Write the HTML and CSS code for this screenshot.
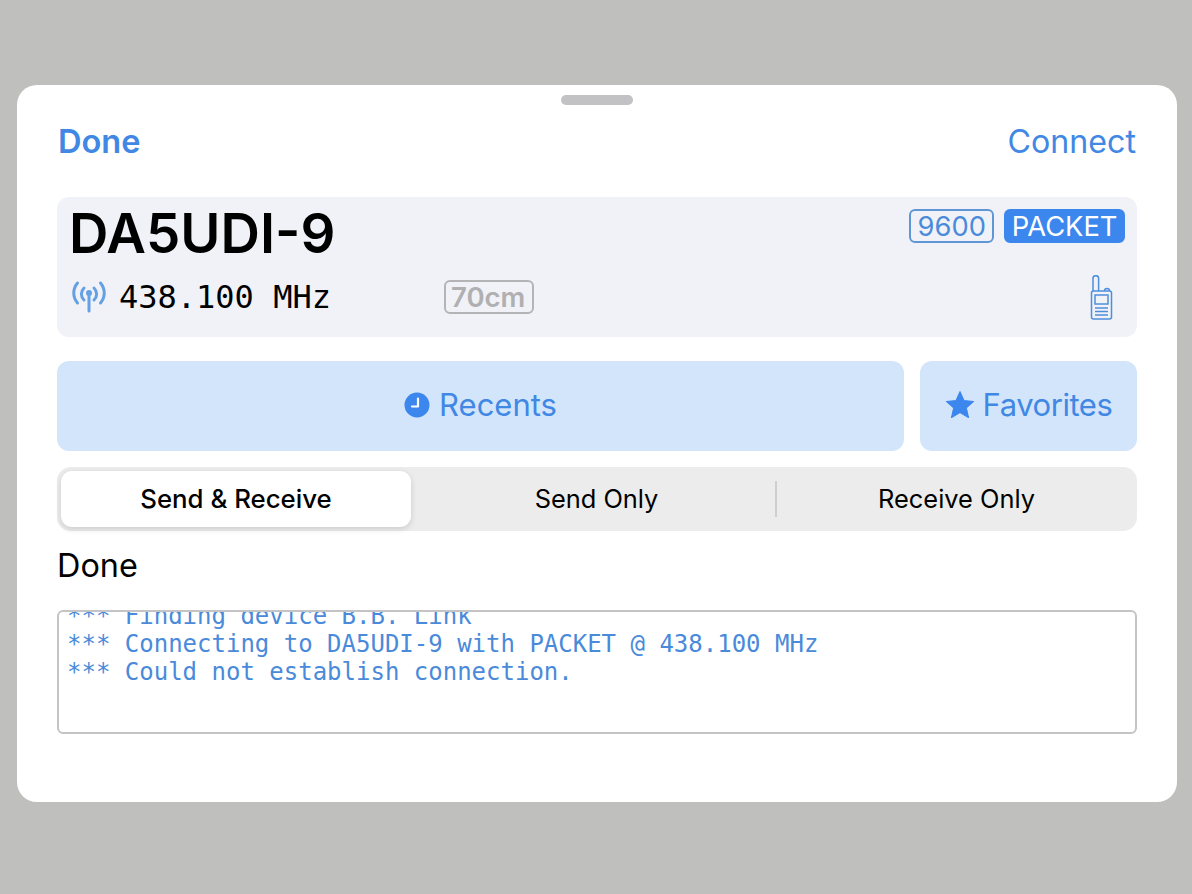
FILE: index.html
```html
<!DOCTYPE html>
<html lang="en">
<head>
<meta charset="utf-8">
<title>Connect</title>
<link rel="stylesheet" href="styles.css">
</head>
<body>
<main class="sheet">
  <div class="grabber"></div>
  <header class="nav">
    <span class="nav-done">Done</span>
    <span class="nav-connect">Connect</span>
  </header>
  <section class="station">
    <div class="station-top">
      <h1 class="callsign">DA5UDI-9</h1>
      <div class="badges">
        <span class="badge badge-outline">9600</span>
        <span class="badge badge-fill">PACKET</span>
      </div>
    </div>
    <div class="station-bottom">
      <svg class="antenna" viewBox="0 0 36 34" width="36" height="34" fill="none" stroke="#64a0e4" stroke-width="3" stroke-linecap="round">
        <path d="M18 14V31"/>
        <circle cx="18" cy="13" r="3" fill="#64a0e4" stroke="none"/>
        <path d="M13 8C9.500 11.500 9.500 16.500 13 20"/>
        <path d="M23 8C26.500 11.500 26.500 16.500 23 20"/>
        <path d="M6.500 3C1.500 9 1.500 17 6.500 23"/>
        <path d="M29.500 3C34.500 9 34.500 17 29.500 23"/>
      </svg>
      <span class="freq">438.100 MHz</span>
      <span class="band">70cm</span>
      <svg class="radio" viewBox="0 0 24 46" width="24" height="46" fill="none" stroke="#4d8fdc" stroke-width="1.500">
        <path d="M3 16V3.500a2.800 2.800 0 0 1 5.600 0V16"/>
        <path d="M14.500 16c0-3.500 5-3.500 5 0"/>
        <rect x="1.500" y="16" width="20" height="28" rx="2"/>
        <rect x="5" y="20" width="13" height="9"/>
        <path d="M5 33H18M5 36.500H18M5 40H18"/>
      </svg>
    </div>
  </section>
  <section class="actions">
    <button class="action action-wide">
      <svg class="action-icon" viewBox="0 0 26 26" width="26" height="26"><circle cx="13" cy="13" r="12.500" fill="#3c87ee"/><path d="M14 6.500V14.500H8" fill="none" stroke="#fff" stroke-width="2.200" stroke-linecap="round" stroke-linejoin="round"/></svg>
      <span>Recents</span>
    </button>
    <button class="action action-narrow">
      <svg class="action-icon" viewBox="0 0 28 28" width="30" height="30"><path d="M14 1.500l3.700 8.300 9 .9-6.800 6 2 8.900L14 21l-7.900 4.600 2-8.900-6.800-6 9-.9z" fill="#3c87ee" stroke="#3c87ee" stroke-width="1" stroke-linejoin="round"/></svg>
      <span class="favorites-label">Favorites</span>
    </button>
  </section>
  <section class="segments">
    <div class="segment segment-active">Send &amp; Receive</div>
    <div class="segment segment-middle">Send Only</div>
    <div class="divider"></div>
    <div class="segment segment-last">Receive Only</div>
  </section>
  <p class="status">Done</p>
  <pre class="log"><code class="log-text">*** Finding device B.B. Link
*** Connecting to DA5UDI-9 with PACKET @ 438.100 MHz
*** Could not establish connection.</code></pre>
</main>
</body>
</html>
```
FILE: styles.css
```css
* { box-sizing: border-box; }
html, body { margin: 0; height: 100%; }
body {
  background: #bfc0be;
  font-family: Inter, "Liberation Sans", sans-serif;
  overflow: hidden;
  padding: 85px 15px 0 17px;
}
.sheet {
  position: relative;
  height: 717px;
  background: #fff;
  border-radius: 20px;
  padding: 0 40px;
  display: flex;
  flex-direction: column;
}
.grabber {
  position: absolute;
  top: 10px;
  left: 544px;
  width: 72px;
  height: 10px;
  border-radius: 5px;
  background: #c2c2c4;
}
.nav {
  height: 112px;
  display: flex;
  justify-content: space-between;
  align-items: center;
  font-size: 32.200px;
  color: #4188e4;
  padding: 0 1px;
}
.nav-done { font-weight: 600; font-size: 32.600px; }
.station {
  height: 140px;
  background: #f1f2f7;
  border-radius: 12px;
  padding: 0 12px;
  display: flex;
  flex-direction: column;
}
.station-top {
  height: 77px;
  display: flex;
  justify-content: space-between;
}
.callsign {
  margin: 5px 0 0;
  height: 62px;
  font-size: 54.600px;
  line-height: 62px;
  font-weight: 600;
  color: #000;
}
.badges {
  display: flex;
  gap: 10px;
  margin-top: 12px;
  height: 34px;
}
.badge {
  font-size: 27.300px;
  line-height: 29px;
  border-radius: 6px;
  padding: 1px 6.500px 0;
  border: 2px solid #5f96d8;
  color: #4a8ada;
}
.badge-fill {
  background: #3c87ee;
  border-color: #3c87ee;
  color: #fff;
  padding: 1px 5.500px 0;
}
.station-bottom {
  display: flex;
  align-items: center;
  height: 46px;
}
.antenna { margin-left: 2px; }
.freq {
  font-family: "DejaVu Sans Mono", monospace;
  font-size: 32px;
  color: #000;
  margin-left: 12px;
  width: 325px;
}
.band {
  font-size: 27.500px;
  font-weight: 600;
  line-height: 30px;
  color: #b0b0b2;
  border: 2px solid #b4b4b6;
  border-radius: 6px;
  padding: 0 7px 0 5px;
}
.radio { margin: 2px 11px 0 auto; }
.actions {
  display: flex;
  gap: 16px;
  margin-top: 24px;
  height: 90px;
}
.action {
  border: 0;
  font: inherit;
  font-size: 31px;
  color: #4188e4;
  background: #d3e5fb;
  border-radius: 12px;
  display: flex;
  align-items: center;
  justify-content: center;
  gap: 9px;
  padding: 0 0 2px;
}
.action-narrow { gap: 8px; }
.action span { position: relative; top: -1px; }
.favorites-label { letter-spacing: -0.45px; }
.action-wide { flex: 1; }
.action-narrow { width: 217px; }
.segments {
  display: flex;
  align-items: center;
  margin-top: 16px;
  height: 64px;
  background: #ececec;
  border-radius: 14px;
  padding: 4px;
}
.segment {
  height: 56px;
  display: flex;
  align-items: center;
  justify-content: center;
  font-size: 25.400px;
  font-weight: 400;
  color: #000;
  padding-bottom: 1px;
}
.segment-active {
  width: 350px;
  background: #fff;
  border-radius: 11px;
  box-shadow: 0 2px 6px rgba(0, 0, 0, 0.14);
  font-size: 25.800px;
  font-weight: 500;
}
.segment-middle { flex: 1; padding-left: 7px; }
.segment-last { width: 356px; padding-left: 3px; }
.divider { width: 2px; height: 36px; background: #cfcfcf; }
.status {
  margin: 15px 0 0;
  font-size: 32.400px;
  line-height: 40px;
  color: #000;
}
.log {
  margin: 24px 0 0;
  height: 124px;
  border: 2px solid #c4c4c6;
  border-radius: 6px;
  overflow: hidden;
  padding: 0 8px;
  font-family: "DejaVu Sans Mono", monospace;
  font-size: 24px;
  line-height: 28px;
  color: #4a8ada;
}
.log-text { display: block; margin-top: -10px; font: inherit; }
```
